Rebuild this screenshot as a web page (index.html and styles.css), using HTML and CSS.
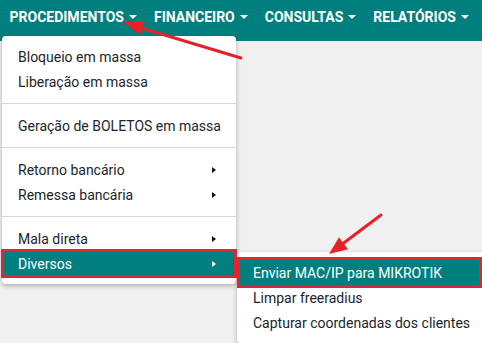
FILE: index.html
```html
<!DOCTYPE html>
<html lang="pt-BR">
<head>
<meta charset="utf-8">
<title>Menu</title>
<link rel="stylesheet" href="styles.css">
</head>
<body>
<nav class="navbar">
  <a class="nav-link">Procedimentos<span class="caret"></span></a>
  <a class="nav-link">Financeiro<span class="caret"></span></a>
  <a class="nav-link">Consultas<span class="caret"></span></a>
  <a class="nav-link">Relatórios<span class="caret"></span></a>
</nav>
<ul class="dropdown">
  <li class="item">Bloqueio em massa</li>
  <li class="item">Liberação em massa</li>
  <li class="divider"></li>
  <li class="item">Geração de BOLETOS em massa</li>
  <li class="divider"></li>
  <li class="item has-sub">Retorno bancário<span class="sub-caret"></span></li>
  <li class="item has-sub">Remessa bancária<span class="sub-caret"></span></li>
  <li class="divider"></li>
  <li class="item has-sub">Mala direta<span class="sub-caret"></span></li>
  <li class="item has-sub active marked-a">Diversos<span class="sub-caret"></span>
    <ul class="submenu">
      <li class="item active marked-b">Enviar MAC/IP para MIKROTIK</li>
      <li class="item">Limpar freeradius</li>
      <li class="item">Capturar coordenadas dos clientes</li>
    </ul>
  </li>
</ul>
<svg class="annotations" width="482" height="343" viewBox="0 0 482 343">
  <line x1="241" y1="58" x2="138" y2="27" stroke="#e5222a" stroke-width="3" stroke-linecap="round"/>
  <polygon points="123,22 144.5,20.8 140.1,34.8" fill="#e5222a"/>
  <line x1="381" y1="215" x2="341" y2="245" stroke="#e5222a" stroke-width="3" stroke-linecap="round"/>
  <polygon points="329,254 339,237.2 348,249.2" fill="#e5222a"/>
</svg>
</body>
</html>
```
FILE: styles.css
```css
html, body {
  margin: 0;
  padding: 0;
  overflow: hidden;
}
body {
  background: #f0f0f0;
  font-family: Roboto, "Liberation Sans", sans-serif;
  width: 482px;
  height: 343px;
  position: relative;
}
.navbar {
  display: flex;
  height: 41px;
  background: #007f7e;
  padding-left: 1px;
}
.nav-link {
  display: flex;
  align-items: flex-start;
  padding: 9px 8.5px 0;
  color: #fff;
  font-weight: 700;
  font-size: 14px;
  line-height: 16px;
  text-transform: uppercase;
  white-space: nowrap;
}
.caret {
  display: inline-block;
  width: 0;
  height: 0;
  margin: 5.5px 0 0 5px;
  border-top: 4px solid #fff;
  border-left: 4.3px solid transparent;
  border-right: 4.3px solid transparent;
}
.dropdown {
  position: absolute;
  left: 2px;
  top: 36px;
  width: 234px;
  margin: 0;
  padding: 8px 0;
  list-style: none;
  background: #fff;
  border-radius: 4px;
  box-shadow: 0 2px 5px rgba(0, 0, 0, 0.28);
}
.item {
  position: relative;
  display: flex;
  align-items: center;
  height: 25px;
  padding: 0 20px 0 16px;
  font-size: 14px;
  color: #212529;
  white-space: nowrap;
}
.divider {
  height: 1px;
  margin: 9px 0;
  background: #d6d6d6;
}
.sub-caret {
  margin-left: auto;
  width: 0;
  height: 0;
  border-left: 4px solid #111;
  border-top: 3.5px solid transparent;
  border-bottom: 3.5px solid transparent;
}
.item.active {
  background: #007f7e;
  color: #fff;
}
.item.active > .sub-caret {
  border-left-color: #fff;
}
.submenu {
  position: absolute;
  left: calc(100% + 1px);
  top: 1px;
  width: 260px;
  margin: 0;
  padding: 8px 0;
  list-style: none;
  background: #fff;
  border-radius: 4px;
  box-shadow: 0 2px 5px rgba(0, 0, 0, 0.28);
}
.marked-a::after,
.marked-b::after {
  content: "";
  position: absolute;
  border: 3px solid #e3262b;
  pointer-events: none;
}
.marked-a::after {
  left: -1px;
  right: -1px;
  top: -2px;
  bottom: -2px;
}
.marked-b::after {
  left: 0;
  right: 15px;
  top: -3px;
  bottom: -3px;
}
.annotations {
  position: absolute;
  left: 0;
  top: 0;
  pointer-events: none;
}
```
